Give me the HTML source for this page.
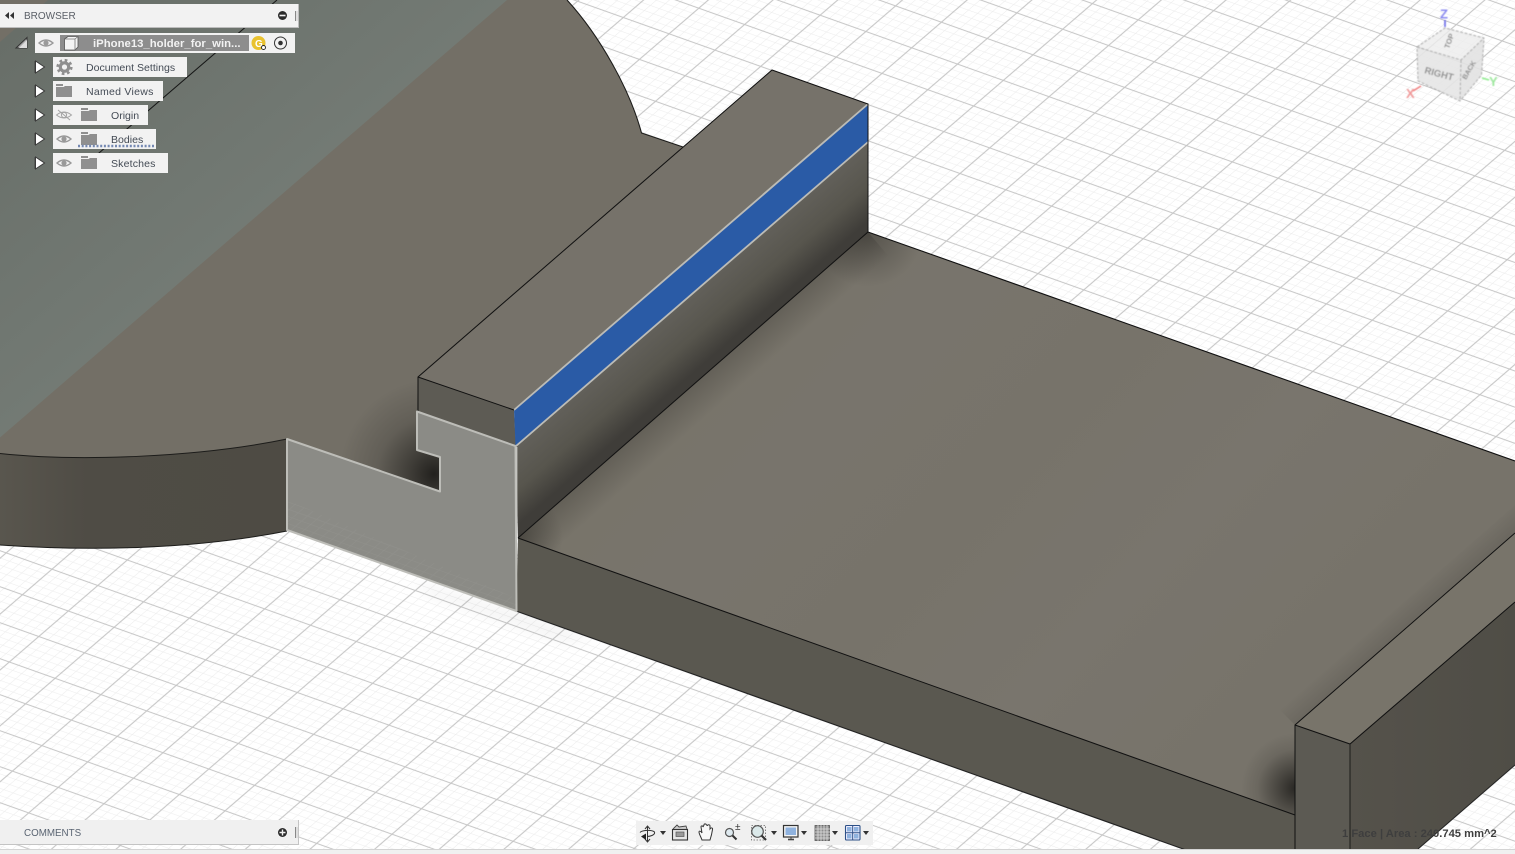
<!DOCTYPE html>
<html><head><meta charset="utf-8"><title>Fusion</title>
<style>
html,body{margin:0;padding:0;background:#fff;width:1515px;height:854px;overflow:hidden}
svg{display:block;font-family:"Liberation Sans",Arial,sans-serif}
</style></head><body>
<svg width="1515" height="854" viewBox="0 0 1515 854" xmlns="http://www.w3.org/2000/svg">
<defs>
<pattern id="gu" patternUnits="userSpaceOnUse" width="100" height="100" patternTransform="matrix(.458 .163 -.297 .256 1140.7 129.3)">
<g fill="#ebebeb">
<rect x="19.4" y="0" width="1.2" height="100"/><rect x="39.4" y="0" width="1.2" height="100"/><rect x="59.4" y="0" width="1.2" height="100"/><rect x="79.4" y="0" width="1.2" height="100"/>
<rect y="19.3" x="0" height="1.4" width="100"/><rect y="39.3" x="0" height="1.4" width="100"/><rect y="59.3" x="0" height="1.4" width="100"/><rect y="79.3" x="0" height="1.4" width="100"/>
</g>
<g fill="#c6c6c6">
<rect x="0" y="0" width="1.3" height="100"/><rect x="98.7" y="0" width="1.3" height="100"/>
<rect x="0" y="0" width="100" height="1.5"/><rect x="0" y="98.5" width="100" height="1.5"/>
</g>
</pattern>
<pattern id="gl" patternUnits="userSpaceOnUse" width="100" height="100" patternTransform="matrix(.458 .163 -.295 .255 68.3 611)">
<g fill="#ebebeb">
<rect x="19.4" y="0" width="1.2" height="100"/><rect x="39.4" y="0" width="1.2" height="100"/><rect x="59.4" y="0" width="1.2" height="100"/><rect x="79.4" y="0" width="1.2" height="100"/>
<rect y="19.3" x="0" height="1.4" width="100"/><rect y="39.3" x="0" height="1.4" width="100"/><rect y="59.3" x="0" height="1.4" width="100"/><rect y="79.3" x="0" height="1.4" width="100"/>
</g>
<g fill="#c6c6c6">
<rect x="0" y="0" width="1.3" height="100"/><rect x="98.7" y="0" width="1.3" height="100"/>
<rect x="0" y="0" width="100" height="1.5"/><rect x="0" y="98.5" width="100" height="1.5"/>
</g>
</pattern>
<filter id="b7" x="-50%" y="-50%" width="200%" height="200%"><feGaussianBlur stdDeviation="7"/></filter>
<filter id="b05" x="-20%" y="-20%" width="140%" height="140%"><feGaussianBlur stdDeviation=".65"/></filter>
<clipPath id="lower"><polygon points="0,500 287,500 520,600 1300,880 0,880"/></clipPath>
<clipPath id="diskC"><path d="M0,0 L567,0 C600,36 630,90 641.5,133 L683,147 L418,377 L418,411 L417,450 L440,457 L440,491 L287,439 C200,457 80,462 0,453.5 Z"/></clipPath>
<clipPath id="plateC"><polygon points="518,538 868,232 1515,461 1515,533 1295,725 1295,815"/></clipPath>
<linearGradient id="cyl" x1="0" y1="0" x2="1" y2="0"><stop offset="0" stop-color="#59564e"/><stop offset=".3" stop-color="#4f4c45"/><stop offset="1" stop-color="#4e4b44"/></linearGradient>
<linearGradient id="gr" x1="0" y1="0" x2="1" y2="1"><stop offset="0" stop-color="#676d67"/><stop offset=".5" stop-color="#737a74"/><stop offset="1" stop-color="#6d746e"/></linearGradient>
<linearGradient id="rs" x1="0" y1="0" x2="1" y2="0"><stop offset="0" stop-color="#55524b"/><stop offset="1" stop-color="#4f4d46"/></linearGradient>
<linearGradient id="sd" gradientUnits="userSpaceOnUse" x1="700" y1="288" x2="739" y2="333"><stop offset="0" stop-color="#62605a"/><stop offset=".55" stop-color="#57554d"/><stop offset="1" stop-color="#3f3d39"/></linearGradient>
<linearGradient id="pl" gradientUnits="userSpaceOnUse" x1="700" y1="300" x2="1200" y2="760"><stop offset="0" stop-color="#787469"/><stop offset=".25" stop-color="#78746c"/><stop offset=".5" stop-color="#77736a"/><stop offset=".75" stop-color="#79756d"/><stop offset="1" stop-color="#77736a"/></linearGradient>
<linearGradient id="ps1" gradientUnits="userSpaceOnUse" x1="700" y1="378" x2="722" y2="403"><stop offset="0" stop-color="#201e1c" stop-opacity=".24"/><stop offset="1" stop-color="#201e1c" stop-opacity="0"/></linearGradient>
<linearGradient id="ps2" gradientUnits="userSpaceOnUse" x1="1400" y1="633" x2="1385" y2="616"><stop offset="0" stop-color="#201e1c" stop-opacity=".14"/><stop offset="1" stop-color="#201e1c" stop-opacity="0"/></linearGradient>
<radialGradient id="dsh" gradientUnits="userSpaceOnUse" cx="434" cy="474" r="95"><stop offset="0" stop-color="#141311" stop-opacity=".85"/><stop offset=".25" stop-color="#141311" stop-opacity=".55"/><stop offset=".6" stop-color="#141311" stop-opacity=".18"/><stop offset="1" stop-color="#141311" stop-opacity="0"/></radialGradient>
<radialGradient id="csh" gradientUnits="userSpaceOnUse" cx="1296" cy="788" r="55"><stop offset="0" stop-color="#141311" stop-opacity=".8"/><stop offset=".35" stop-color="#141311" stop-opacity=".45"/><stop offset=".7" stop-color="#141311" stop-opacity=".12"/><stop offset="1" stop-color="#141311" stop-opacity="0"/></radialGradient>
<radialGradient id="ash" gradientUnits="userSpaceOnUse" cx="868" cy="232" r="55"><stop offset="0" stop-color="#141311" stop-opacity=".35"/><stop offset="1" stop-color="#141311" stop-opacity="0"/></radialGradient>
<radialGradient id="bsh" gradientUnits="userSpaceOnUse" cx="518" cy="538" r="45"><stop offset="0" stop-color="#141311" stop-opacity=".3"/><stop offset="1" stop-color="#141311" stop-opacity="0"/></radialGradient>
</defs>

<rect width="1515" height="854" fill="#fff"/>
<rect width="1515" height="854" fill="url(#gu)"/>
<g clip-path="url(#lower)"><rect width="1515" height="854" fill="#fff"/><rect width="1515" height="854" fill="url(#gl)"/></g>

<polygon points="410,580 516,612 600,642 560,640 430,595" fill="#000" opacity=".05" filter="url(#b7)"/>

<!-- cylinder side -->
<path d="M0,450 L287,436 L287,531 C200,548 100,552 0,545 Z" fill="url(#cyl)"/>
<path d="M0,545 C100,552 200,548 287,531" fill="none" stroke="#1c1c1a" stroke-width="1"/>

<!-- disk top -->
<path d="M0,0 L567,0 C600,36 630,90 641.5,133 L683,147 L418,377 L418,411 L417,450 L440,457 L440,491 L287,439 C200,457 80,462 0,453.5 Z" fill="#736f66"/>
<g clip-path="url(#diskC)">
<polygon points="0,0 507,0 0,437.5" fill="url(#gr)"/>
<polygon points="0,0 48,0 0,42" fill="#736f66"/>
<rect x="330" y="370" width="120" height="130" fill="url(#dsh)"/>
</g>
<path d="M567,0 C600,36 630,90 641.5,133 L683,147" fill="none" stroke="#1c1c1a" stroke-width="1.1"/>
<path d="M0,453.5 C80,462 200,457 287,439" fill="none" stroke="#1c1c1a" stroke-width="1"/>
<line x1="277" y1="0" x2="85" y2="165" stroke="#161616" stroke-width="1"/>

<!-- block small front face -->
<polygon points="418,377 514,410 516,447 417,411" fill="#5d5b54"/>
<!-- block top -->
<polygon points="772,70 868,104 514,410 418,377" fill="#76726a"/>
<!-- block side -->
<polygon points="516,447 868,142 868,232 518,538" fill="url(#sd)"/>
<!-- blue -->
<polygon points="514,410 868,104 868,142 515.5,446" fill="#2a5ba6"/>
<line x1="514" y1="410" x2="868" y2="104" stroke="#bcbcb7" stroke-width="1.8"/>
<line x1="516" y1="446" x2="868" y2="142" stroke="#bcbcb7" stroke-width="1.8"/>
<polyline points="418,411 418,377 772,70 868,104 868,232" fill="none" stroke="#111" stroke-width="1"/>
<polyline points="418,377 514,410" fill="none" stroke="#111" stroke-width="1"/>

<!-- plate top -->
<polygon points="518,538 868,232 1515,461 1515,533 1295,725 1295,815" fill="url(#pl)"/>
<g clip-path="url(#plateC)">
<polygon points="518,538 868,232 890,258 540,564" fill="url(#ps1)"/>
<rect x="800" y="170" width="130" height="125" fill="url(#ash)"/>
<rect x="465" y="485" width="105" height="105" fill="url(#bsh)"/>
<rect x="1235" y="730" width="62" height="90" fill="url(#csh)"/>
<polygon points="1295,725 1515,533 1515,505 1280,710" fill="url(#ps2)"/>
</g>
<!-- plate front -->
<polygon points="518,538 1295,815 1295,850 1186,850 516,611" fill="#5a5850"/>
<!-- right block -->
<polygon points="1295,725 1515,533 1515,602 1350,744" fill="#78746a"/>
<polygon points="1295,725 1350,744 1350,850 1295,850" fill="#5c5a53"/>
<polygon points="1350,744 1515,602 1515,765 1418,849 1350,849" fill="url(#rs)"/>
<!-- lines -->
<polyline points="868,232 1515,461" fill="none" stroke="#111" stroke-width="1.1"/>
<line x1="518" y1="538" x2="868" y2="232" stroke="#111" stroke-width="1"/>
<line x1="518" y1="538" x2="1295" y2="815" stroke="#111" stroke-width="1"/>
<line x1="516" y1="611" x2="1186" y2="850" stroke="#222" stroke-width="1.1"/>
<polyline points="1295,850 1295,725 1515,533" fill="none" stroke="#111" stroke-width="1"/>
<polyline points="1295,725 1350,744 1515,602" fill="none" stroke="#111" stroke-width="1"/>
<line x1="1350" y1="744" x2="1350" y2="850" stroke="#1c1c1a" stroke-width="1"/>
<line x1="1515" y1="765" x2="1418" y2="849" stroke="#222" stroke-width="1"/>

<!-- selected grey face -->
<polygon points="287,439 440,491.5 440,457 417,450 417,411.5 515.5,446 516.5,611 287,530" fill="#8b8b86"/>
<g clip-path="url(#lower)" opacity=".06"><polygon points="287,439 440,491.5 440,457 417,450 417,411.5 515.5,446 516.5,611 287,530" fill="url(#gl)"/></g>
<polygon points="287,439 440,491.5 440,457 417,450 417,411.5 515.5,446 516.5,611 287,530" fill="none" stroke="#bdbdb8" stroke-width="2" stroke-linejoin="round"/>
<line x1="516.5" y1="447" x2="516.5" y2="540" stroke="#c4c4c0" stroke-width="1.8"/>

<!-- status text -->
<text x="1342" y="837" font-size="11.2" font-weight="bold" fill="#3e3e3e">1 Face | Area : 240.745 mm^2</text>

<!-- viewcube -->
<g filter="url(#b05)">
<polygon points="1417,47 1445,28 1484,38 1461,60" fill="#ececec" fill-opacity=".8"/>
<polygon points="1417,47 1461,60 1460,101 1418,81" fill="#e6e6e6" fill-opacity=".9"/>
<polygon points="1461,60 1484,38 1481.5,75 1460,101" fill="#e2e2e2" fill-opacity=".9"/>
<g fill="none" stroke="#ababab" stroke-width="1" stroke-dasharray="3 1.5">
<polygon points="1417,47 1445,28 1484,38 1481.5,75 1460,101 1418,81"/>
<polyline points="1417,47 1461,60 1484,38"/>
<line x1="1461" y1="60" x2="1460" y2="101"/>
</g>
<text transform="translate(1424,73) rotate(15)" font-size="9.5" font-weight="bold" fill="#939393">RIGHT</text>
<text transform="translate(1466,80) rotate(-60)" font-size="7" font-weight="bold" fill="#8d8d8d">BACK</text>
<text transform="translate(1449,49) rotate(-70)" font-size="7.5" font-weight="bold" fill="#8a8a8a">TOP</text>
<line x1="1445" y1="20" x2="1445" y2="27" stroke="#6a6ae8" stroke-width="1.6"/>
<text x="1440" y="18.5" font-size="13" font-weight="bold" fill="#8a8af0">Z</text>
<line x1="1482" y1="78" x2="1489" y2="80" stroke="#90ee90" stroke-width="1.6"/>
<text x="1489" y="86" font-size="13" font-weight="bold" fill="#9fe89f">Y</text>
<line x1="1421" y1="86" x2="1413" y2="91" stroke="#f08080" stroke-width="1.6"/>
<text x="1406" y="98" font-size="13" font-weight="bold" fill="#f09a9a">X</text>
</g>

<!-- browser panel -->
<rect x="0" y="4" width="298" height="23" fill="#f2f2f2"/>
<path d="M0,27.5 H298.5 V4" fill="none" stroke="#bdbdbd"/>
<path d="M9,12 L5,15.5 L9,19 Z M14,12 L10,15.5 L14,19 Z" fill="#333"/>
<text x="24" y="19" font-size="10" fill="#5a5f66">BROWSER</text>
<circle cx="282.5" cy="15.5" r="4.5" fill="#2b2b2b"/><rect x="279.5" y="14.7" width="6" height="1.6" fill="#f2f2f2"/>
<line x1="295.5" y1="11" x2="295.5" y2="21" stroke="#888"/><line x1="297" y1="11" x2="297" y2="21" stroke="#ccc"/>

<path d="M16,48 L27,37.5 V48 Z" fill="#a8a8a8" stroke="#333" stroke-width="1"/>
<path d="M19,48 L27,40 V48 Z" fill="#ddd"/>
<rect x="35" y="33" width="260" height="20" fill="#f2f2f2"/>
<g transform="translate(46,43)"><path d="M-7,0 Q0,-6 7,0 Q0,6 -7,0 Z" fill="none" stroke="#9a9a9a" stroke-width="1.4"/><circle r="2.6" fill="#9a9a9a"/></g>
<rect x="60" y="35" width="189" height="16" fill="#8d8d8d"/>
<path d="M64.5,39 L68,36.5 H78 V47 L75,50 H64.5 Z" fill="#f4f4f4" stroke="#555" stroke-width=".8"/>
<path d="M64.5,39 H75 V50 M75,39 L78,36.5" fill="none" stroke="#777" stroke-width=".8"/>
<text x="93" y="47" font-size="11.35" font-weight="bold" fill="#f2f2f2">iPhone13_holder_for_win...</text>
<circle cx="258.5" cy="43" r="7" fill="#e9c22f"/>
<text x="255" y="47" font-size="10" font-weight="bold" fill="#fff">G</text>
<circle cx="263.5" cy="47.5" r="2" fill="#fff" stroke="#222" stroke-width=".9"/>
<circle cx="280.5" cy="43" r="6" fill="#f2f2f2" stroke="#333" stroke-width="1"/><circle cx="280.5" cy="43" r="2.3" fill="#333"/>

<g fill="#f2f2f2">
<rect x="53" y="57" width="134" height="20"/>
<rect x="53" y="81" width="110" height="20"/>
<rect x="53" y="105" width="95" height="20"/>
<rect x="53" y="129" width="103" height="20"/>
<rect x="53" y="153" width="115" height="20"/>
</g>
<g fill="#fff" stroke="#3a3a3a" stroke-width="1">
<path d="M35.5,61 L44.5,67 L35.5,73 Z"/>
<path d="M35.5,85 L44.5,91 L35.5,97 Z"/>
<path d="M35.5,109 L44.5,115 L35.5,121 Z"/>
<path d="M35.5,133 L44.5,139 L35.5,145 Z"/>
<path d="M35.5,157 L44.5,163 L35.5,169 Z"/>
</g>
<g fill="none" stroke="#3a3a3a" stroke-width="1.2">
<line x1="35.2" y1="61" x2="35.2" y2="73"/><line x1="35.2" y1="85" x2="35.2" y2="97"/><line x1="35.2" y1="109" x2="35.2" y2="121"/><line x1="35.2" y1="133" x2="35.2" y2="145"/><line x1="35.2" y1="157" x2="35.2" y2="169"/>
</g>
<!-- gear -->
<g transform="translate(64.5,67)" fill="none" stroke="#8f8f8f">
<circle r="6.6" stroke-width="3" stroke-dasharray="2.6 2.58"/>
<circle r="4.2" stroke-width="3.2"/>
</g>
<!-- folders -->
<g fill="#8f8f8f">
<path d="M56,84 H63 V86 H56 Z M56,87 H63.5 L65,86 H72 V97 H56 Z"/>
<path d="M81,108 H88 V110 H81 Z M81,111 H88.5 L90,110 H97 V121 H81 Z"/>
<path d="M81,132 H88 V134 H81 Z M81,135 H88.5 L90,134 H97 V145 H81 Z"/>
<path d="M81,156 H88 V158 H81 Z M81,159 H88.5 L90,158 H97 V169 H81 Z"/>
</g>
<!-- eyes -->
<g transform="translate(64,115)"><path d="M-7.5,0 Q0,-6 7.5,0 Q0,6 -7.5,0 Z" fill="none" stroke="#a5a5a5" stroke-width="1"/><circle r="2.6" fill="none" stroke="#a5a5a5"/><line x1="-6" y1="-5" x2="6" y2="5" stroke="#a5a5a5"/></g>
<g transform="translate(64,139)"><path d="M-7,0 Q0,-6 7,0 Q0,6 -7,0 Z" fill="none" stroke="#999" stroke-width="1.4"/><circle r="2.6" fill="#999"/></g>
<g transform="translate(64,163)"><path d="M-7,0 Q0,-6 7,0 Q0,6 -7,0 Z" fill="none" stroke="#999" stroke-width="1.4"/><circle r="2.6" fill="#999"/></g>
<g font-size="10.55" fill="#444b55">
<text x="86" y="71">Document Settings</text>
<text x="86" y="95" letter-spacing=".25">Named Views</text>
<text x="111" y="119">Origin</text>
<text x="111" y="143">Bodies</text>
<text x="111" y="167" letter-spacing=".15">Sketches</text>
</g>
<line x1="78" y1="146" x2="154" y2="146" stroke="#7488b2" stroke-width="2.6" stroke-dasharray="2 1.7"/>

<!-- comments -->
<rect x="0" y="820" width="298" height="24" fill="#f0f0f0"/>
<path d="M0,844.5 H298.5 V820" fill="none" stroke="#c4c4c4"/>
<text x="24" y="836" font-size="9.8" fill="#5a6472">COMMENTS</text>
<circle cx="282.5" cy="832.5" r="4.5" fill="#2b2b2b"/><path d="M279.5,832.5 H285.5 M282.5,829.5 V835.5" stroke="#f0f0f0" stroke-width="1.4"/>
<line x1="295.5" y1="827" x2="295.5" y2="838" stroke="#888"/><line x1="297" y1="827" x2="297" y2="838" stroke="#ccc"/>

<!-- bottom strip -->
<rect x="0" y="849" width="1515" height="5" fill="#f0f0f0"/>
<line x1="0" y1="849.5" x2="1515" y2="849.5" stroke="#d4d4d4"/>

<!-- nav toolbar -->
<rect x="636" y="821" width="237" height="24" fill="#f0f0f0"/>
<g fill="#333">
<path d="M660,831 h6 l-3,4 Z"/><path d="M771,831 h6 l-3,4 Z"/><path d="M801,831 h6 l-3,4 Z"/><path d="M832,831 h6 l-3,4 Z"/><path d="M863,831 h6 l-3,4 Z"/>
</g>
<!-- orbit -->
<g fill="none" stroke="#333" stroke-width="1">
<path d="M647.5,827 V841"/><path d="M645,829 L647.5,826 L650,829"/><path d="M645,839 L647.5,842 L650,839"/>
<path d="M640,832.5 C642,830 652,829.5 654.5,832 C655.5,835 650,836.5 647,836.5"/>
</g>
<path d="M641,836.5 L646,833.5 V840 Z" fill="#222"/>
<!-- look at -->
<path d="M673,829 L677,825 L679,827 L686,826 L687,829" fill="#ccc" stroke="#444" stroke-width=".9"/>
<rect x="672.5" y="829.5" width="15" height="10.5" fill="#e6e6e6" stroke="#333" stroke-width="1.1"/>
<rect x="676" y="832" width="8" height="4.5" fill="#9a9a9a" stroke="#555" stroke-width=".7"/>
<!-- hand -->
<path d="M702,840 C701,837 699,834 699,832 C699,830.5 701,831 702,833 L701,827 C701,825.5 703,825.5 703,827 L704,825 C704,823.5 706,823.5 706.5,825 L707.5,825.5 C708,824.5 710,824.5 710,826 V829 C711,827.5 713,827.5 712.5,829.5 C712,833 711,837 710,840 Z" fill="#f8f8f8" stroke="#333" stroke-width="1"/>
<!-- zoom +- -->
<circle cx="729.5" cy="832.5" r="4" fill="#dfeaf0" stroke="#555" stroke-width="1.2"/>
<line x1="732.5" y1="835.5" x2="736.5" y2="839.5" stroke="#333" stroke-width="2"/>
<text x="735" y="830" font-size="10" fill="#333">±</text>
<!-- zoom fit -->
<rect x="751.5" y="825.5" width="14" height="14.5" fill="none" stroke="#666" stroke-width=".8" stroke-dasharray="1.5 1.5"/>
<circle cx="757.5" cy="831.5" r="5.8" fill="#dbe9ea" stroke="#555" stroke-width="1.2"/>
<line x1="761.5" y1="835.5" x2="766" y2="840" stroke="#333" stroke-width="2.2"/>
<!-- display -->
<rect x="783.5" y="825.5" width="14.5" height="11.5" fill="#f4f4f4" stroke="#333" stroke-width="1.2"/>
<rect x="785.5" y="827.5" width="10.5" height="7.5" fill="#8fb2de"/>
<path d="M788,839.5 H794" stroke="#444" stroke-width="1.6"/><line x1="791" y1="837" x2="791" y2="839" stroke="#444"/>
<!-- grid -->
<rect x="815" y="825.5" width="14.5" height="15" fill="#8e8e8e" stroke="#555" stroke-width=".8"/>
<path d="M818,825 V841 M821,825 V841 M824,825 V841 M827,825 V841 M815,829 H830 M815,832 H830 M815,835 H830 M815,838 H830" stroke="#dedede" stroke-width=".8"/>
<!-- viewports -->
<rect x="845.5" y="825.5" width="14.5" height="14.5" rx="1" fill="#eef" stroke="#2c4f86" stroke-width="1.1"/>
<path d="M852.7,825.5 V840 M845.5,832.7 H860" stroke="#2c4f86" stroke-width="1"/>
<g fill="#8fb2de"><rect x="847" y="827" width="4.5" height="4.5"/><rect x="854" y="827" width="4.5" height="4.5"/><rect x="847" y="834" width="4.5" height="4.5"/><rect x="854" y="834" width="4.5" height="4.5"/></g>
</svg>
</body></html>
